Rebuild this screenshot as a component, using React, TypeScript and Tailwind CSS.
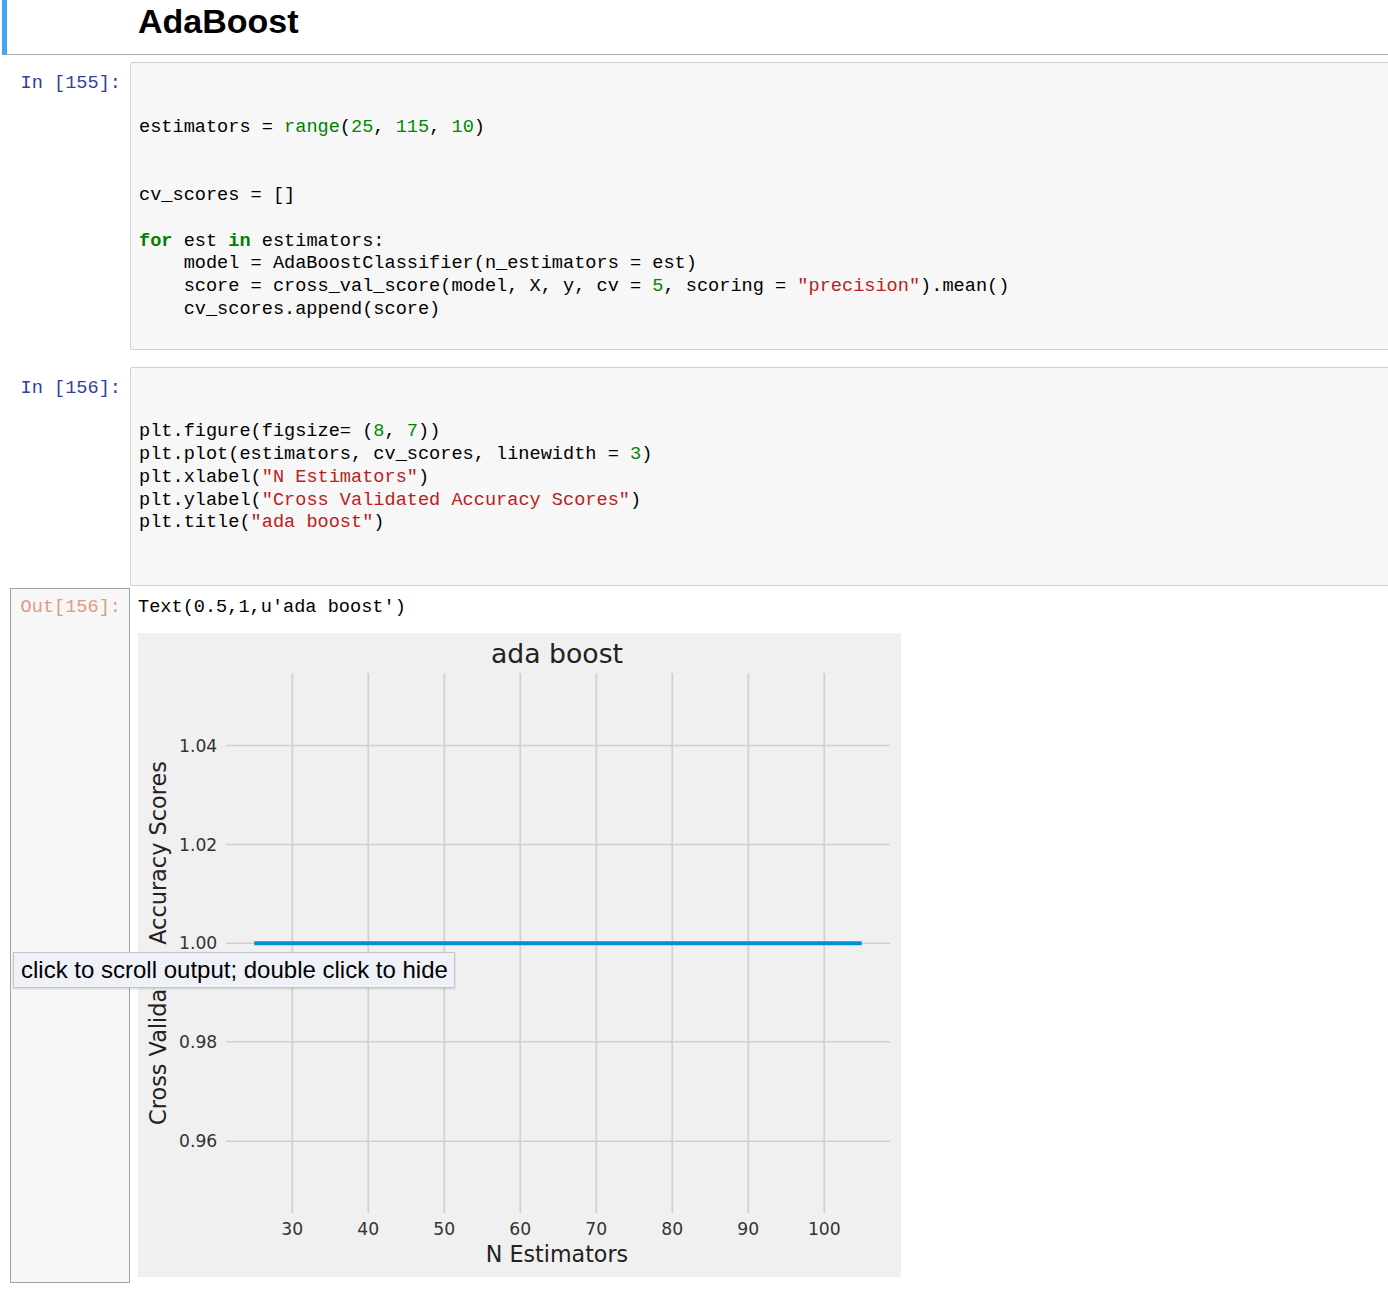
import React from "react";

const mono = { fontFamily: '"Liberation Mono", "DejaVu Sans Mono", monospace' };

type Tok = string | React.ReactElement;

const N = (s: string) => <span className="text-[#008800]">{s}</span>;
const B = (s: string) => <span className="text-[#008000]">{s}</span>;
const K = (s: string) => <span className="font-bold text-[#008000]">{s}</span>;
const S = (s: string) => <span className="text-[#BA2121]">{s}</span>;

const cell1: Tok[][] = [
  [""],
  [""],
  ["estimators = ", B("range"), "(", N("25"), ", ", N("115"), ", ", N("10"), ")"],
  [""],
  [""],
  ["cv_scores = []"],
  [""],
  [K("for"), " est ", K("in"), " estimators:"],
  ["    model = AdaBoostClassifier(n_estimators = est)"],
  ["    score = cross_val_score(model, X, y, cv = ", N("5"), ", scoring = ", S('"precision"'), ").mean()"],
  ["    cv_scores.append(score)"],
  [""],
];

const cell2: Tok[][] = [
  [""],
  [""],
  ["plt.figure(figsize= (", N("8"), ", ", N("7"), "))"],
  ["plt.plot(estimators, cv_scores, linewidth = ", N("3"), ")"],
  ["plt.xlabel(", S('"N Estimators"'), ")"],
  ["plt.ylabel(", S('"Cross Validated Accuracy Scores"'), ")"],
  ["plt.title(", S('"ada boost"'), ")"],
  [""],
  [""],
];

function CodeLines({ lines }: { lines: Tok[][] }) {
  return (
    <>
      {lines.map((l, i) => (
        <div key={i} className="h-[22.8px] whitespace-pre">
          {l.map((t, j) => (
            <React.Fragment key={j}>{t}</React.Fragment>
          ))}
        </div>
      ))}
    </>
  );
}

function InCell({ n, lines, className }: { n: number; lines: Tok[][]; className?: string }) {
  return (
    <div className={"flex " + (className ?? "")} style={mono}>
      <div className="w-[130px] shrink-0 pt-[11px] pr-[9px] text-right text-[18.6px] leading-[22.8px] text-[#303F9F]">
        In [{n}]:
      </div>
      <div className="flex-1 rounded-[2px] border border-[#cfcfcf] bg-[#f7f7f7] px-[8px] pt-[8px] pb-[4px] text-[18.6px] leading-[22.8px] text-black">
        <CodeLines lines={lines} />
      </div>
    </div>
  );
}

function Plot() {
  const xs = [30, 40, 50, 60, 70, 80, 90, 100];
  const xpos = (v: number) => 154.3 + (v - 30) * 7.6;
  const ys = [
    { v: "1.04", y: 112.5 },
    { v: "1.02", y: 211.5 },
    { v: "1.00", y: 310.2 },
    { v: "0.98", y: 408.8 },
    { v: "0.96", y: 508.3 },
  ];
  const font = '"DejaVu Sans", "Liberation Sans", sans-serif';
  return (
    <svg width="763" height="644" viewBox="0 0 763 644" className="block">
      <rect x="0" y="0" width="763" height="644" fill="#f0f0f0" />
      {xs.map((v) => (
        <line key={v} x1={xpos(v)} x2={xpos(v)} y1={40} y2={580} stroke="#cfcfcf" strokeWidth="1.6" />
      ))}
      {ys.map((t) => (
        <line key={t.v} x1={88} x2={752} y1={t.y} y2={t.y} stroke="#cfcfcf" strokeWidth="1.6" />
      ))}
      <line x1={116.3} x2={723.7} y1={310.2} y2={310.2} stroke="#008fd5" strokeWidth="4" />
      <text x="419" y="30" textAnchor="middle" fontFamily={font} fontSize="26.7" fill="#222">
        ada boost
      </text>
      {ys.map((t) => (
        <text key={t.v} x="79.3" y={t.y + 6} textAnchor="end" fontFamily={font} fontSize="17.2" fill="#333">
          {t.v}
        </text>
      ))}
      {xs.map((v) => (
        <text key={v} x={xpos(v)} y="602" textAnchor="middle" fontFamily={font} fontSize="17.2" fill="#333">
          {v}
        </text>
      ))}
      <text x="419" y="628.5" textAnchor="middle" fontFamily={font} fontSize="22.2" fill="#222">
        N Estimators
      </text>
      <text
        x="0"
        y="0"
        transform="translate(28 310) rotate(-90)"
        textAnchor="middle"
        fontFamily={font}
        fontSize="22.4"
        fill="#222"
      >
        Cross Validated Accuracy Scores
      </text>
    </svg>
  );
}

export default function App() {
  return (
    <div className="relative h-[1298px] w-[1388px] overflow-hidden bg-white">
      <div className="w-[1420px]">
        {/* header markdown cell */}
        <div className="ml-[2px] h-[55px] border-b border-l-[5px] border-b-[#ababab] border-l-[#42A5F5] pl-[131px]">
          <div
            className="pt-[1px] text-[34px] font-bold leading-[40px] text-black"
            style={{ fontFamily: '"Liberation Sans", Arial, sans-serif' }}
          >
            AdaBoost
          </div>
        </div>

        <InCell n={155} lines={cell1} className="mt-[7px]" />
        <InCell n={156} lines={cell2} className="mt-[17px]" />

        {/* output */}
        <div className="mt-[2px] flex" style={mono}>
          <div className="ml-[10px] w-[120px] shrink-0 border border-[#a2a2a2] bg-[#f7f7f7] pt-[8px] pr-[8px] text-right text-[18.6px] leading-[22.8px] text-[#e49982]">
            Out[156]:
          </div>
          <div className="flex-1 pl-[8px] pt-[9px] pb-[6px]">
            <div className="h-[22.8px] whitespace-pre text-[18.6px] leading-[22.8px] text-black">
              Text(0.5,1,u'ada boost')
            </div>
            <div className="mt-[13px]">
              <Plot />
            </div>
          </div>
        </div>
      </div>

      {/* tooltip */}
      <div
        className="absolute left-[13px] top-[952px] flex h-[36px] w-[442px] items-center border border-[#c6c6c6] bg-[#eef2f8] pl-[7px] text-[24px] leading-none text-black shadow-[0_1px_2px_rgba(0,0,0,0.15)]"
        style={{ fontFamily: '"Liberation Sans", Arial, sans-serif' }}
      >
        click to scroll output; double click to hide
      </div>
    </div>
  );
}
